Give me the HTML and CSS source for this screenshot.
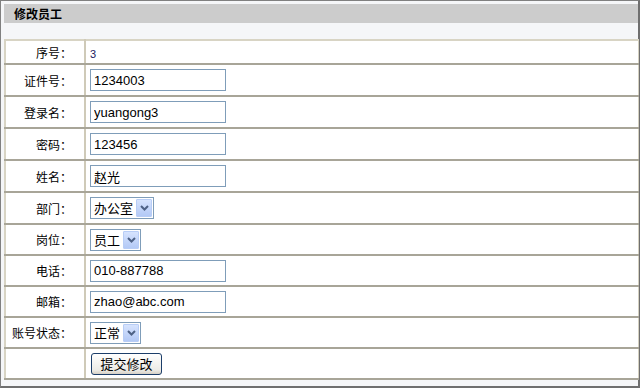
FILE: index.html
```html
<!DOCTYPE html>
<html>
<head>
<meta charset="utf-8">
<link rel="stylesheet" href="styles.css">
</head>
<body>
<div class="frame">
  <div class="title">修改员工</div>
  <table class="form">
    <tr class="first"><td class="lbl">序号：</td><td class="val"><span class="num">3</span></td></tr>
    <tr class="tall"><td class="lbl">证件号：</td><td class="val"><input class="txt" type="text" value="1234003"></td></tr>
    <tr class="tall"><td class="lbl">登录名：</td><td class="val"><input class="txt" type="text" value="yuangong3"></td></tr>
    <tr class="tall"><td class="lbl">密码：</td><td class="val"><input class="txt" type="text" value="123456"></td></tr>
    <tr class="tall"><td class="lbl">姓名：</td><td class="val"><input class="txt" type="text" value="赵光"></td></tr>
    <tr class="tall"><td class="lbl">部门：</td><td class="val"><span class="sel"><span class="sel-text">办公室</span><span class="sel-btn"><svg width="9" height="6" viewBox="0 0 9 6"><path d="M1 1 L4.5 4.5 L8 1" fill="none" stroke="#4d6185" stroke-width="2"/></svg></span></span></td></tr>
    <tr><td class="lbl">岗位：</td><td class="val"><span class="sel"><span class="sel-text">员工</span><span class="sel-btn"><svg width="9" height="6" viewBox="0 0 9 6"><path d="M1 1 L4.5 4.5 L8 1" fill="none" stroke="#4d6185" stroke-width="2"/></svg></span></span></td></tr>
    <tr><td class="lbl">电话：</td><td class="val"><input class="txt" type="text" value="010-887788"></td></tr>
    <tr><td class="lbl">邮箱：</td><td class="val"><input class="txt" type="text" value="zhao@abc.com"></td></tr>
    <tr><td class="lbl">账号状态：</td><td class="val"><span class="sel"><span class="sel-text">正常</span><span class="sel-btn"><svg width="9" height="6" viewBox="0 0 9 6"><path d="M1 1 L4.5 4.5 L8 1" fill="none" stroke="#4d6185" stroke-width="2"/></svg></span></span></td></tr>
    <tr><td class="lbl"></td><td class="val"><button class="btn" type="button">提交修改</button></td></tr>
  </table>
</div>
</body>
</html>
```
FILE: styles.css
```css
html, body { margin: 0; padding: 0; }
body {
  width: 640px;
  height: 388px;
  overflow: hidden;
  background: #ffffff;
  font-family: "Noto Sans CJK SC", "Liberation Sans", sans-serif;
  font-size: 12px;
  color: #000;
}
.frame {
  box-sizing: border-box;
  width: 640px;
  height: 388px;
  border-top: 1px solid #808080;
  border-left: 1px solid #808080;
  border-right: 2px solid #6f6f6f;
  border-bottom: 2px solid #6f6f6f;
  background: #f5f6f8;
  padding: 3px 0 0 3px;
}
.title {
  height: 19px;
  background: #cccccc;
  font-weight: bold;
  font-size: 12px;
  line-height: 19px;
  padding-left: 10px;
  margin-bottom: 16px;
}
.form {
  width: 635px;
  border-collapse: collapse;
  background: #ffffff;
  border-top: 2px solid #d8d4c4;
  border-left: 2px solid #d8d4c4;
}
.form td {
  border: 1px solid #d4d0c0;
  border-bottom: 2px solid #a8a598;
  height: 29px;
  padding: 0;
}
.form tr.tall td { height: 30px; }
.form tr.first td { height: 22px; }
.lbl {
  width: 66px;
  text-align: right;
  padding-right: 12px !important;
  border-right: 2px solid #cfcab8 !important;
}
.val { padding-left: 4px !important; }
.num {
  font-family: "Liberation Sans", sans-serif;
  font-size: 11px;
  color: #202060;
}
.txt {
  box-sizing: border-box;
  width: 136px;
  height: 22px;
  border: 1px solid #7f9db9;
  padding: 0 3px;
  margin: 0;
  font-family: "Liberation Sans", "Noto Sans CJK SC", sans-serif;
  font-size: 13px;
  color: #000;
  background: #fff;
  vertical-align: middle;
}
.sel {
  display: inline-flex;
  align-items: center;
  box-sizing: border-box;
  height: 22px;
  border: 1px solid #7f9db9;
  background: #fff;
  padding: 1px;
  vertical-align: middle;
}
.sel-text {
  font-size: 13px;
  padding: 0 3px 0 2px;
  line-height: 18px;
}
.sel-btn {
  display: flex;
  align-items: center;
  justify-content: center;
  width: 16px;
  height: 18px;
  box-sizing: border-box;
  background: linear-gradient(#d6e3fe, #b3c9f6);
  border: 1px solid #b8cdf6;
  border-radius: 1px;
}
.btn {
  box-sizing: border-box;
  width: 71px;
  height: 22px;
  margin: 0 0 0 1px;
  padding: 0;
  border: 1px solid #1c3e6a;
  border-radius: 3px;
  background: linear-gradient(#ffffff, #ecebe6 80%, #d6d0c5);
  font-family: "Noto Sans CJK SC", sans-serif;
  font-size: 13px;
  color: #000;
  vertical-align: middle;
}
```
